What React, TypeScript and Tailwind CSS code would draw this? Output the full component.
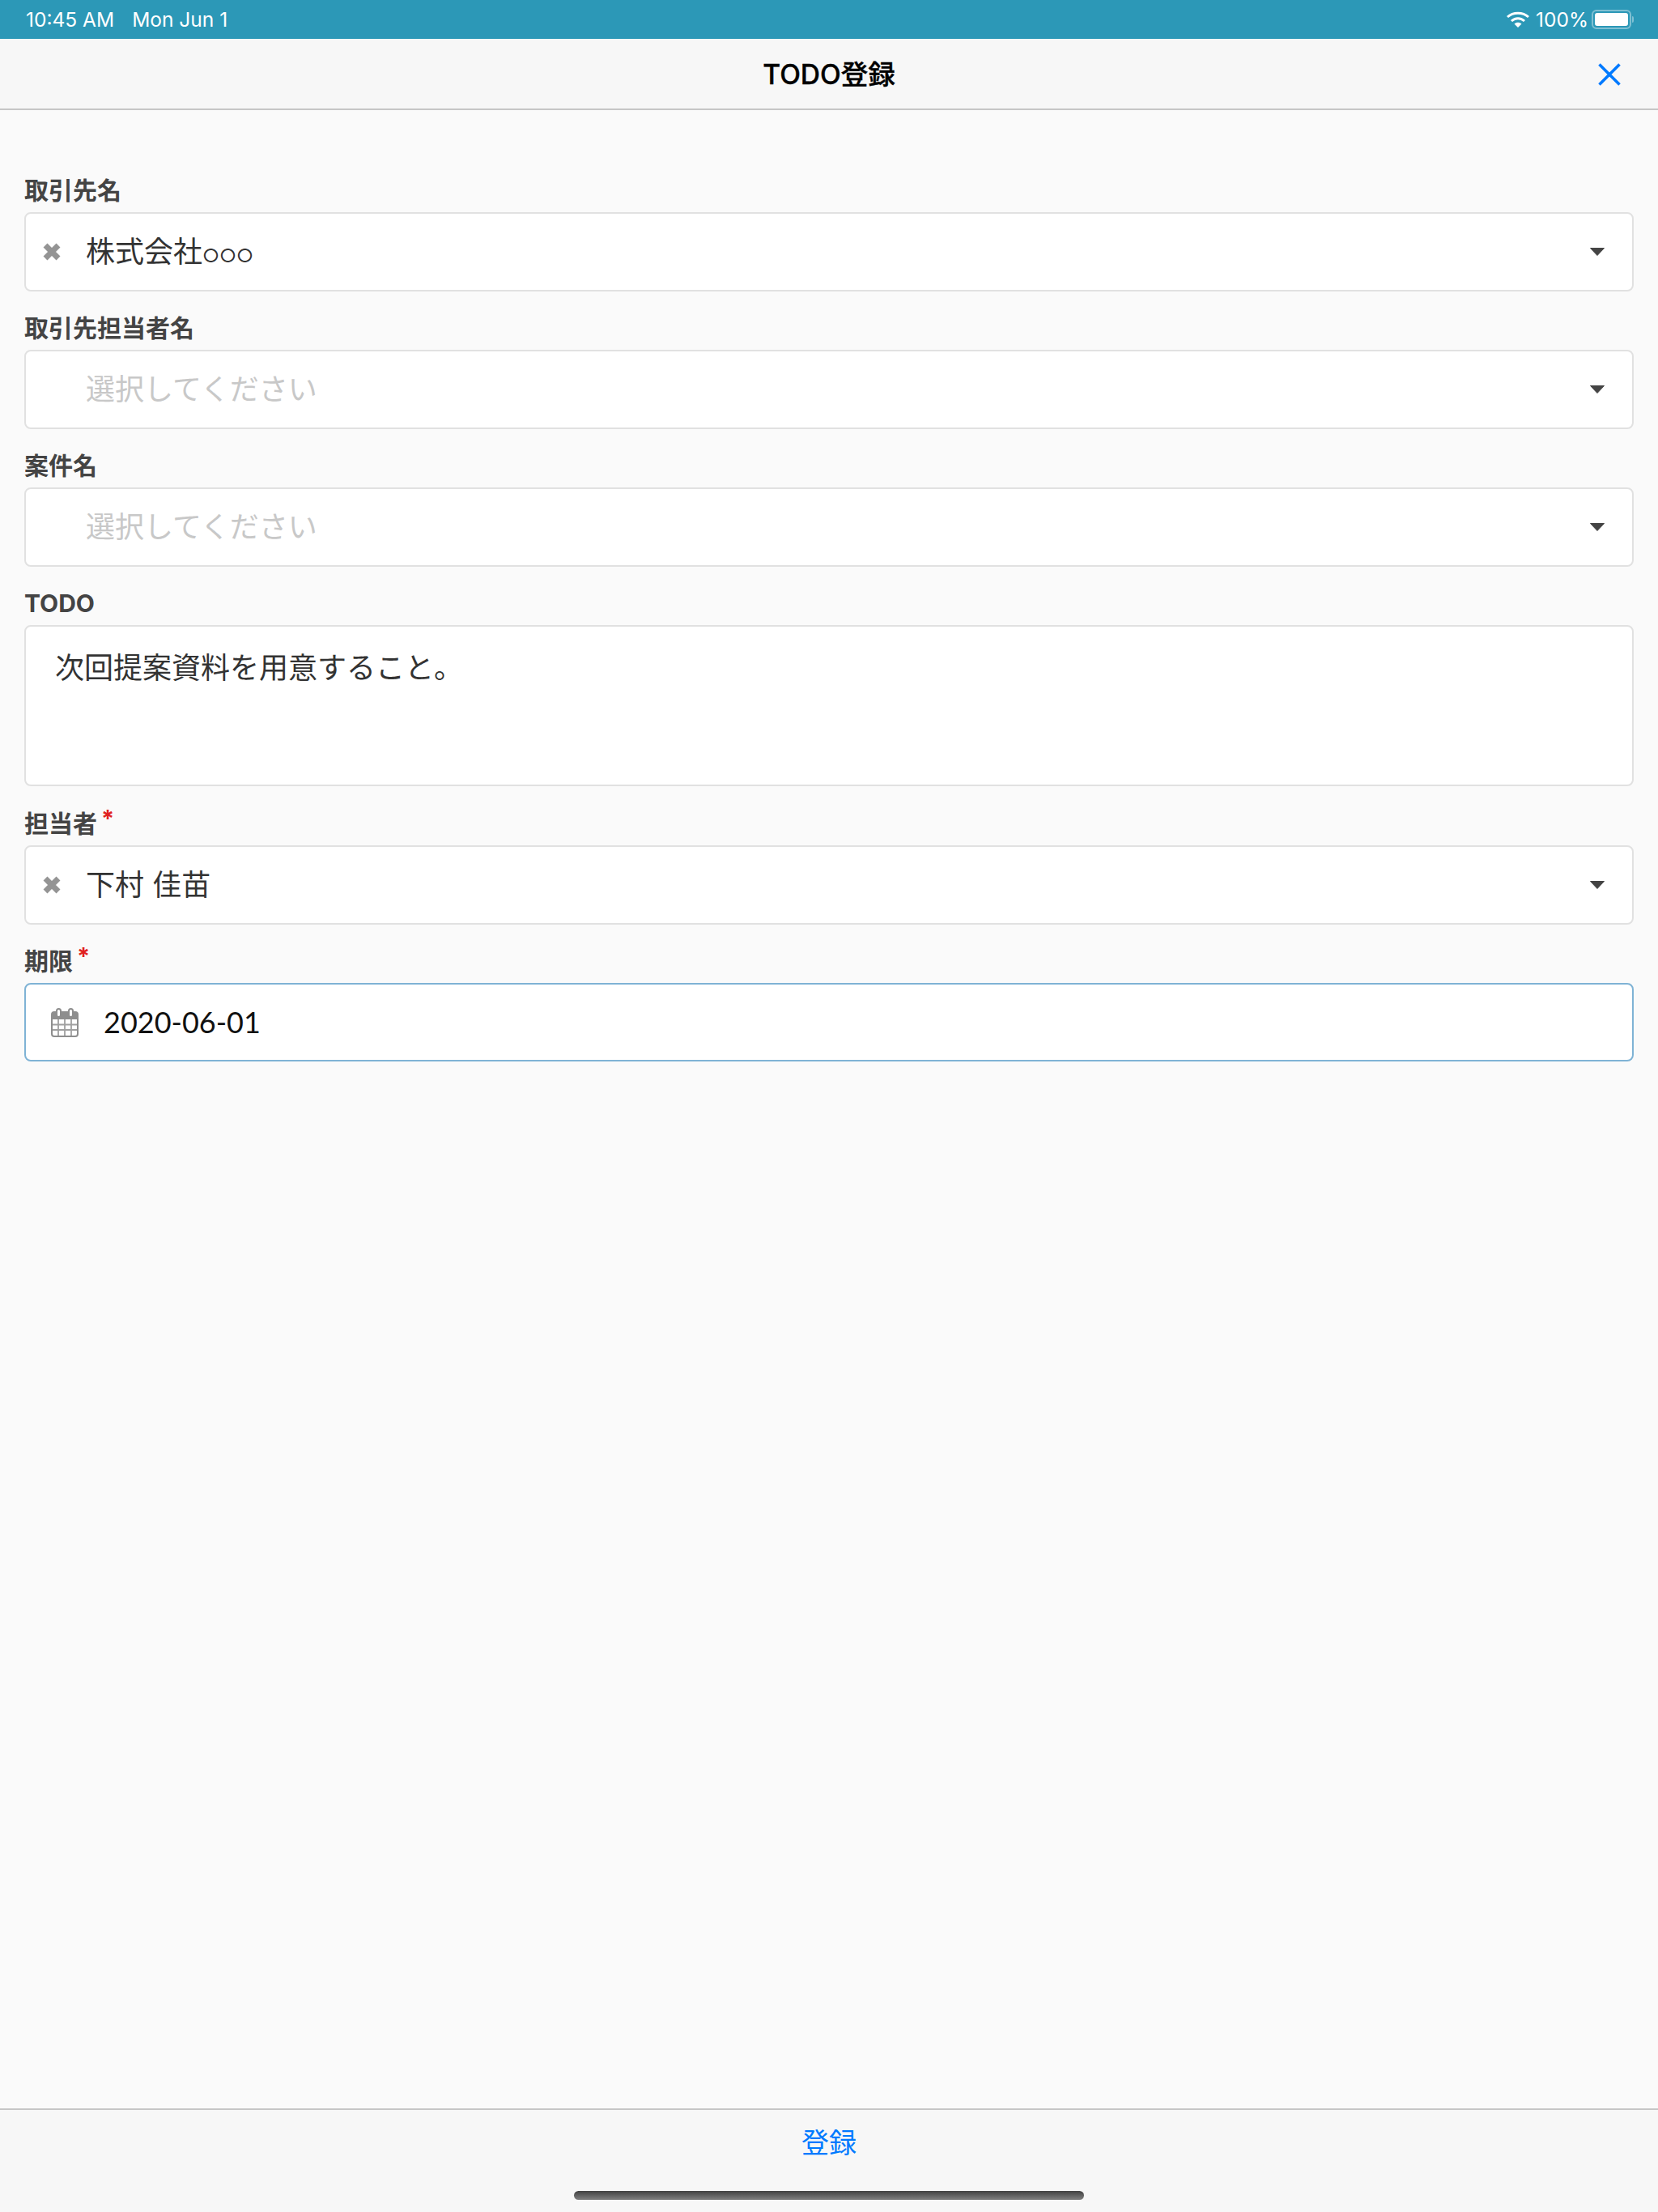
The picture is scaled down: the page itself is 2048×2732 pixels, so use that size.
const jp = "font-['Inter','Noto_Sans_CJK_JP',sans-serif]";

function Label({ text, required }: { text: string; required?: boolean }) {
  return (
    <div className="flex h-[42px] items-center pb-[12px] text-[30px] leading-[30px] font-bold text-[#444444]">
      <span>{text}</span>
      {required ? (
        <span className="ml-[5px] -mt-[14px] text-[29px] leading-none font-bold text-[#e02020]">*</span>
      ) : null}
    </div>
  );
}

function ClearIcon() {
  return (
    <svg width="24" height="24" viewBox="0 0 24 24" className="shrink-0">
      <path d="M4 4 L20 20 M20 4 L4 20" stroke="#949494" strokeWidth="7" />
    </svg>
  );
}

function SelectBox({ value, circles, placeholder, clearable }: { value?: string; circles?: string; placeholder?: string; clearable?: boolean }) {
  return (
    <div className="flex h-[98px] items-center rounded-[8px] border-2 border-[#e1e1e1] bg-white pl-[20px] pr-[34px]">
      <div className="flex w-[24px] shrink-0 justify-center">{clearable ? <ClearIcon /> : null}</div>
      <div className={`ml-[30px] flex-1 text-[36px] ${value ? "text-[#333333]" : "text-[#c8c8c8]"}`}>
        {value ?? placeholder}
        {circles ? <span className="text-[23px]">{circles}</span> : null}
      </div>
      <svg width="20" height="12" viewBox="0 0 20 12" className="-mr-[1px]">
        <path d="M1.5 1.5 H18.5 L10 10.5 Z" fill="#444444" stroke="#444444" strokeLinejoin="round" />
      </svg>
    </div>
  );
}

function CalendarIcon() {
  return (
    <svg width="34" height="36" viewBox="0 0 34 36" className="shrink-0">
      <rect x="1" y="5" width="32" height="30" rx="3" fill="#ffffff" stroke="#8e8e8e" strokeWidth="2" />
      <rect x="1" y="5" width="32" height="9" fill="#8e8e8e" />
      <rect x="7" y="1" width="5" height="10" rx="2.5" fill="#ffffff" stroke="#8e8e8e" strokeWidth="2" />
      <rect x="22" y="1" width="5" height="10" rx="2.5" fill="#ffffff" stroke="#8e8e8e" strokeWidth="2" />
      <path d="M9 14 V34 M17 14 V34 M25 14 V34 M2 20.5 H32 M2 27 H32" stroke="#a0a0a0" strokeWidth="1.8" />
    </svg>
  );
}

export default function App() {
  return (
    <div className={`flex h-[2732px] w-[2048px] flex-col overflow-hidden bg-[#fafafa] ${jp}`}>
      {/* status bar */}
      <div className="flex h-[48px] shrink-0 items-center justify-between bg-[#2c98b7] pl-[32px] pr-[30px] text-[24.5px] text-white">
        <div className="flex gap-[22px]">
          <span>10:45 AM</span>
          <span>Mon Jun 1</span>
        </div>
        <div className="flex items-center">
          <svg width="28" height="20" viewBox="0 0 28 20" className="mr-[8px]">
            <path d="M1 7 C8 0.5 20 0.5 27 7" fill="none" stroke="#ffffff" strokeWidth="3" />
            <path d="M6 12 C10.5 7.5 17.5 7.5 22 12" fill="none" stroke="#ffffff" strokeWidth="3" />
            <path d="M9.5 15.5 C12 13 16 13 18.5 15.5 L14 20 Z" fill="#ffffff" />
          </svg>
          <span>100%</span>
          <div className="ml-[4px] flex items-center">
            <div className="flex h-[24px] w-[49px] items-center justify-center rounded-[6px] border-2 border-[#7fc0d3]">
              <div className="h-[16px] w-[41px] rounded-[3px] bg-white" />
            </div>
            <div className="ml-[1px] h-[8px] w-[2px] rounded-r-[2px] bg-[#7fc0d3]" />
          </div>
        </div>
      </div>

      {/* header */}
      <div className="relative flex h-[88px] shrink-0 items-center justify-center border-b-2 border-[#c6c6c6] bg-[#f7f7f7]">
        <span className="pt-[2px] text-[33.5px] font-medium text-black [-webkit-text-stroke:0.4px_black]">TODO登録</span>
        <svg width="28" height="28" viewBox="0 0 28 28" className="absolute right-[46px] top-[30px]">
          <path d="M1.5 1.5 L26.5 26.5 M26.5 1.5 L1.5 26.5" stroke="#007aff" strokeWidth="3.6" />
        </svg>
      </div>

      {/* form */}
      <div className="flex flex-1 flex-col px-[30px] pt-[84px]">
        <Label text="取引先名" />
        <SelectBox value="株式会社" circles="○○○" clearable />
        <div className="mt-[30px]">
          <Label text="取引先担当者名" />
        </div>
        <SelectBox placeholder="選択してください" />
        <div className="mt-[30px]">
          <Label text="案件名" />
        </div>
        <SelectBox placeholder="選択してください" />
        <div className="mt-[30px]">
          <Label text="TODO" />
        </div>
        <div className="h-[199px] rounded-[8px] border-2 border-[#e1e1e1] bg-white px-[36px] pt-[26px] text-[36px] leading-[50px] text-[#333333]">
          次回提案資料を用意すること。
        </div>
        <div className="mt-[31px]">
          <Label text="担当者" required />
        </div>
        <SelectBox value="下村 佳苗" clearable />
        <div className="mt-[30px]">
          <Label text="期限" required />
        </div>
        <div className="flex h-[97px] items-center rounded-[8px] border-2 border-[#7fb3d5] bg-white pl-[31px] text-[36px] text-[#111111]">
          <CalendarIcon />
          <span className="ml-[31px] -mt-[1px] font-['Lato','Noto_Sans_CJK_JP',sans-serif]">2020-06-01</span>
        </div>
      </div>

      {/* footer */}
      <div className="flex h-[128px] shrink-0 flex-col items-center border-t-2 border-[#c6c6c6] bg-[#f7f7f7]">
        <div className="mt-[19px] text-[34px] leading-[44px] text-[#007aff]">登録</div>
        <div className="mt-[37px] h-[11px] w-[630px] rounded-[6px] bg-[linear-gradient(to_bottom,#404040,#808080)]" />
      </div>
    </div>
  );
}
